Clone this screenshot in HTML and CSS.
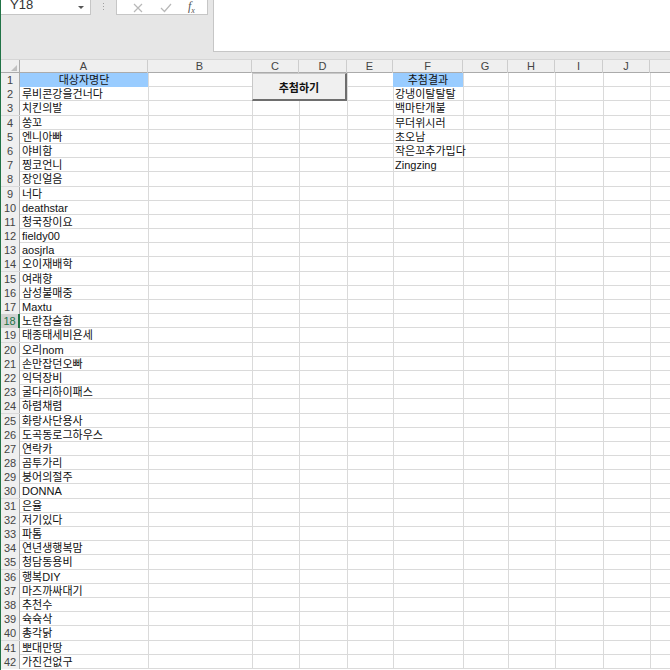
FILE: index.html
```html
<!DOCTYPE html>
<html lang="ko">
<head>
    <meta charset="UTF-8">
    <title>추첨</title>
    <link rel="stylesheet" href="styles.css">
</head>
<body>
    <div class="topbar">
        <div class="name-box">
            <span>Y18</span>
            <span class="arrow"></span>
        </div>
        <div class="dots"><i></i><i></i><i></i></div>
        <div class="fx-box">
            <svg width="10" height="10" viewBox="0 0 10 10"><path d="M1 1L9 9M9 1L1 9" stroke="#b8b8b8" stroke-width="1.2" fill="none"/></svg>
            <svg width="12" height="10" viewBox="0 0 12 10"><path d="M1 5L4.5 8.5L11 1" stroke="#b8b8b8" stroke-width="1.2" fill="none"/></svg>
            <span class="fx">f<sub>x</sub></span>
        </div>
        <div class="formula"></div>
    </div>

    <div class="sheet">
        <div class="col-heads">
            <div class="corner"><span class="tri"></span></div>
            <div>A</div><div>B</div><div>C</div><div>D</div><div>E</div>
            <div>F</div><div>G</div><div>H</div><div>I</div><div>J</div><div class="last"></div>
        </div>

        <div class="rows">
            <div class="row"><div class="rh">1</div><div class="c a head">대상자명단</div><div class="c f head">추첨결과</div></div>
            <div class="row"><div class="rh">2</div><div class="c a">루비콘강을건너다</div><div class="c f">강냉이탈탈탈</div></div>
            <div class="row"><div class="rh">3</div><div class="c a">치킨의발</div><div class="c f">백마탄개불</div></div>
            <div class="row"><div class="rh">4</div><div class="c a">쏭꼬</div><div class="c f">무더위시러</div></div>
            <div class="row"><div class="rh">5</div><div class="c a">엔니아빠</div><div class="c f">초오남</div></div>
            <div class="row"><div class="rh">6</div><div class="c a">야비함</div><div class="c f">작은꼬추가밉다</div></div>
            <div class="row"><div class="rh">7</div><div class="c a">찡코언니</div><div class="c f">Zingzing</div></div>
            <div class="row"><div class="rh">8</div><div class="c a">장인얼음</div></div>
            <div class="row"><div class="rh">9</div><div class="c a">너다</div></div>
            <div class="row"><div class="rh">10</div><div class="c a">deathstar</div></div>
            <div class="row"><div class="rh">11</div><div class="c a">청국장이요</div></div>
            <div class="row"><div class="rh">12</div><div class="c a">fieldy00</div></div>
            <div class="row"><div class="rh">13</div><div class="c a">aosjrla</div></div>
            <div class="row"><div class="rh">14</div><div class="c a">오이재배학</div></div>
            <div class="row"><div class="rh">15</div><div class="c a">여래향</div></div>
            <div class="row"><div class="rh">16</div><div class="c a">삼성불매중</div></div>
            <div class="row"><div class="rh">17</div><div class="c a">Maxtu</div></div>
            <div class="row"><div class="rh selected">18</div><div class="c a">노란잠술함</div></div>
            <div class="row"><div class="rh">19</div><div class="c a">태종태세비욘세</div></div>
            <div class="row"><div class="rh">20</div><div class="c a">오리nom</div></div>
            <div class="row"><div class="rh">21</div><div class="c a">손만잡던오빠</div></div>
            <div class="row"><div class="rh">22</div><div class="c a">익덕장비</div></div>
            <div class="row"><div class="rh">23</div><div class="c a">굴다리하이패스</div></div>
            <div class="row"><div class="rh">24</div><div class="c a">하렴채렴</div></div>
            <div class="row"><div class="rh">25</div><div class="c a">화랑사단용사</div></div>
            <div class="row"><div class="rh">26</div><div class="c a">도곡동로그하우스</div></div>
            <div class="row"><div class="rh">27</div><div class="c a">연락카</div></div>
            <div class="row"><div class="rh">28</div><div class="c a">곰투가리</div></div>
            <div class="row"><div class="rh">29</div><div class="c a">붕어의절주</div></div>
            <div class="row"><div class="rh">30</div><div class="c a">DONNA</div></div>
            <div class="row"><div class="rh">31</div><div class="c a">은율</div></div>
            <div class="row"><div class="rh">32</div><div class="c a">저기있다</div></div>
            <div class="row"><div class="rh">33</div><div class="c a">파톰</div></div>
            <div class="row"><div class="rh">34</div><div class="c a">연년생행복맘</div></div>
            <div class="row"><div class="rh">35</div><div class="c a">청담동용비</div></div>
            <div class="row"><div class="rh">36</div><div class="c a">행복DIY</div></div>
            <div class="row"><div class="rh">37</div><div class="c a">마즈까싸대기</div></div>
            <div class="row"><div class="rh">38</div><div class="c a">추천수</div></div>
            <div class="row"><div class="rh">39</div><div class="c a">슉슉삭</div></div>
            <div class="row"><div class="rh">40</div><div class="c a">총각닭</div></div>
            <div class="row"><div class="rh">41</div><div class="c a">뽀대만땅</div></div>
            <div class="row"><div class="rh">42</div><div class="c a">가진건없구</div></div>
        </div>

        <button class="draw-btn">추첨하기</button>
    </div>
</body>
</html>
```

FILE: styles.css
```css
html, body {
    margin: 0;
    padding: 0;
}

body {
    width: 670px;
    height: 670px;
    overflow: hidden;
    background-color: #e6e6e6;
    border-left: 1px solid #217346;
    box-sizing: border-box;
    font-family: "Liberation Sans", "Noto Sans CJK KR", sans-serif;
    font-size: 11px;
    color: #222;
}

/* formula bar */
.topbar {
    display: flex;
    align-items: flex-start;
    height: 58px;
    margin-top: -6px;
    margin-bottom: 7px;
}

.name-box {
    width: 90px;
    height: 21px;
    box-sizing: border-box;
    background: #fff;
    border: 1px solid #c6c6c6;
    border-left: none;
    display: flex;
    align-items: center;
    justify-content: space-between;
    padding: 0 6px 0 9px;
    font-size: 13px;
    color: #333;
}

.name-box .arrow {
    width: 0;
    height: 0;
    border-left: 3px solid transparent;
    border-right: 3px solid transparent;
    border-top: 3px solid #555;
    margin-top: 6px;
}

.dots {
    width: 25px;
    height: 21px;
    display: flex;
    flex-direction: column;
    align-items: center;
    justify-content: center;
    gap: 2px;
    padding-top: 4px;
    box-sizing: border-box;
}

.dots i {
    width: 1px;
    height: 1px;
    background: #a0a0a0;
}

.fx-box {
    width: 92px;
    height: 21px;
    box-sizing: border-box;
    background: #fff;
    border: 1px solid #c6c6c6;
    display: flex;
    align-items: center;
    justify-content: space-around;
    padding: 6px 4px 0 8px;
}

.fx-box .fx {
    font-family: "Liberation Serif", serif;
    font-style: italic;
    font-size: 12px;
    color: #555;
    line-height: 1;
}

.fx-box .fx sub {
    font-size: 8px;
}

.formula {
    flex: 1;
    height: 58px;
    box-sizing: border-box;
    margin-left: 5px;
    background: #fff;
    border-left: 1px solid #c6c6c6;
    border-bottom: 1px solid #c6c6c6;
}

/* sheet */
.sheet {
    position: relative;
    background: #fff;
    height: 611px;
}

.col-heads, .row {
    display: grid;
    grid-template-columns: 19px 128px 104px 47px 48px 46px 70px 45px 47px 48px 47px 1fr;
}

.col-heads {
    height: 14px;
    box-sizing: border-box;
    background: #efefef;
    border-top: 1px solid #d6d6d6;
    border-bottom: 1px solid #ababab;
}

.col-heads div {
    border-right: 1px solid #cdcdcd;
    text-align: center;
    line-height: 13px;
    color: #444;
}

.col-heads .corner {
    position: relative;
    border-right: 1px solid #ababab;
}

.corner .tri {
    position: absolute;
    right: 2px;
    bottom: 2px;
    width: 0;
    height: 0;
    border-left: 6px solid transparent;
    border-bottom: 6px solid #c0c0c0;
}

.col-heads .last {
    border-right: none;
}

.rows {
    background:
        linear-gradient(#dadada, #dadada) 147px 0 / 1px 100% no-repeat,
        linear-gradient(#dadada, #dadada) 251px 0 / 1px 100% no-repeat,
        linear-gradient(#dadada, #dadada) 298px 0 / 1px 100% no-repeat,
        linear-gradient(#dadada, #dadada) 346px 0 / 1px 100% no-repeat,
        linear-gradient(#dadada, #dadada) 392px 0 / 1px 100% no-repeat,
        linear-gradient(#dadada, #dadada) 462px 0 / 1px 100% no-repeat,
        linear-gradient(#dadada, #dadada) 507px 0 / 1px 100% no-repeat,
        linear-gradient(#dadada, #dadada) 554px 0 / 1px 100% no-repeat,
        linear-gradient(#dadada, #dadada) 602px 0 / 1px 100% no-repeat,
        linear-gradient(#dadada, #dadada) 649px 0 / 1px 100% no-repeat;
}

.row {
    height: 14.2px;
    box-sizing: border-box;
    border-bottom: 1px solid #dadada;
}

.rh {
    grid-column: 1;
    background: #efefef;
    border-right: 1px solid #ababab;
    text-align: center;
    line-height: 14px;
    color: #444;
}

.rh.selected {
    background: #d2d2d2;
    color: #217346;
    border-right: 2px solid #217346;
}

.c {
    line-height: 14px;
    padding-left: 2px;
    white-space: nowrap;
    color: #111;
}

.c.a {
    grid-column: 2;
}

.c.f {
    grid-column: 7;
}

.c.head {
    background: #99ccff;
    text-align: center;
    padding-left: 0;
}

.draw-btn {
    position: absolute;
    left: 251px;
    top: 14px;
    width: 95px;
    height: 28px;
    box-sizing: border-box;
    background: #f0f0f0;
    border: 1px solid #c8c8c8;
    border-right: 2px solid #6e6e6e;
    border-bottom: 2px solid #6e6e6e;
    font-family: "Liberation Sans", "Noto Sans CJK KR", sans-serif;
    font-size: 11px;
    font-weight: bold;
    color: #111;
    padding: 0;
}
```
